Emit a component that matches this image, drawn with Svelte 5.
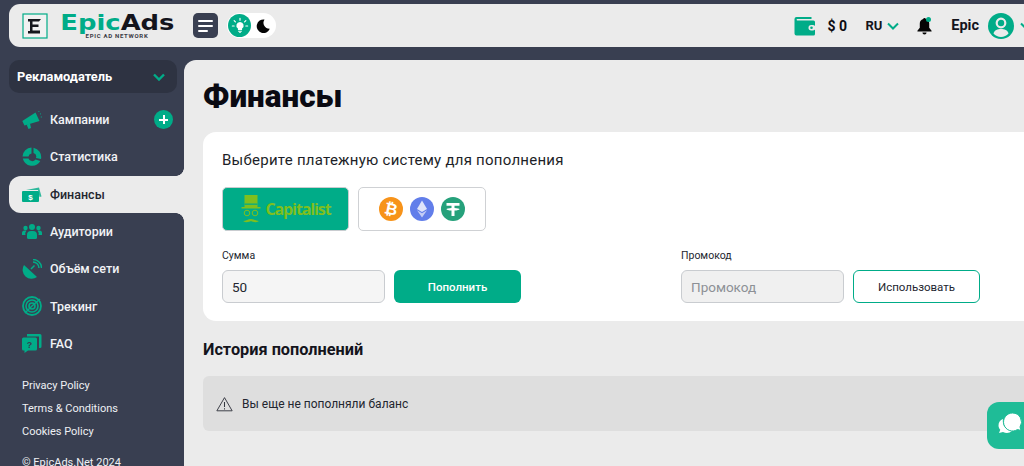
<script>
  const nav = [
    { id: 'camp', label: 'Кампании', plus: true },
    { id: 'stat', label: 'Статистика' },
    { id: 'fin', label: 'Финансы', active: true },
    { id: 'aud', label: 'Аудитории' },
    { id: 'net', label: 'Объём сети' },
    { id: 'track', label: 'Трекинг' },
    { id: 'faq', label: 'FAQ' }
  ];
  const links = ['Privacy Policy', 'Terms & Conditions', 'Cookies Policy'];
</script>

<div class="page">
  <header class="top">
    <svg class="logo" viewBox="0 0 26 26" width="26" height="26">
      <rect x="1" y="1" width="24" height="24" fill="#f1f1f1" stroke="#00ac88" stroke-width="1.200"/>
      <path d="M6 6h13l-2 2.500h-6.500v3h6v2.500h-6v3.500h7.500v3H6v-2.500h2V8.500H6z" fill="#15161c"/>
    </svg>
    <div class="brand">
      <div class="brandname"><span class="g">Epic</span><span class="k">Ads</span></div>
      <div class="tag">EPIC AD NETWORK</div>
    </div>
    <button class="burger" aria-label="menu">
      <span class="l1"></span><span class="l2"></span><span class="l3"></span>
    </button>
    <div class="theme">
      <span class="sun">
        <svg viewBox="0 0 20 20" width="18" height="18">
          <path d="M10 5.500a4 4 0 0 0-2.300 7.300v1.700h4.600v-1.700A4 4 0 0 0 10 5.500zM8 15.400h4v1.100H8zM9 17h2v.8H9z" fill="#fff"/>
          <path d="M10 1.500v2M3.500 4l1.400 1.400M16.500 4l-1.400 1.400M1.500 10h2M16.500 10h2" stroke="#fff" stroke-width="1.300" stroke-linecap="round"/>
        </svg>
      </span>
      <svg class="moon" viewBox="0 0 16 16" width="16" height="16">
        <path d="M9.500 1.500a6.800 6.800 0 1 0 5.300 9.300A6 6 0 0 1 9.500 1.500z" fill="#050505"/>
      </svg>
    </div>
    <div class="spacer"></div>
    <svg class="wallet" viewBox="0 0 22 20" width="23" height="20">
      <path d="M3 1h15v2H3.500a1 1 0 0 0 0 1.500H20a1.500 1.500 0 0 1 1.500 1.500v12A1.500 1.500 0 0 1 20 19.500H3A2 2 0 0 1 1 17.500V3a2 2 0 0 1 2-2z" fill="#00ac88"/>
      <rect x="15" y="9" width="7" height="5.500" rx="2.700" fill="#ebebeb"/>
      <circle cx="18" cy="11.700" r="1.300" fill="#00ac88"/>
    </svg>
    <span class="bal">$ 0</span>
    <span class="lang">RU</span>
    <svg class="chev" viewBox="0 0 12 8" width="12" height="8"><path d="M1 1.500l5 5 5-5" fill="none" stroke="#00ac88" stroke-width="2"/></svg>
    <span class="bell">
      <svg viewBox="0 0 18 20" width="17" height="19">
        <path d="M9 2a1.400 1.400 0 0 1 1.400 1.200A5 5 0 0 1 14 8v4.500l2.500 3v.8h-15v-.8l2.500-3V8a5 5 0 0 1 3.600-4.800A1.400 1.400 0 0 1 9 2zM6.800 17.300h4.400a2.200 2.200 0 0 1-4.400 0z" fill="#050505"/>
      </svg>
      <i></i>
    </span>
    <span class="user">Epic</span>
    <svg class="ava" viewBox="0 0 26 26" width="26" height="26">
      <circle cx="13" cy="13" r="13" fill="#00ac88"/>
      <circle cx="13" cy="10" r="4.300" fill="none" stroke="#ebebeb" stroke-width="2.200"/>
      <path d="M5.500 20.500c1-3.500 4-4.500 7.500-4.500s6.500 1 7.500 4.500a10 10 0 0 1-15 0z" fill="#ebebeb"/>
    </svg>
    <svg class="chev last" viewBox="0 0 12 8" width="12" height="8"><path d="M1 1.500l5 5 5-5" fill="none" stroke="#00ac88" stroke-width="2"/></svg>
  </header>

  <div class="layout">
    <aside class="side">
      <div class="role">
        <span>Рекламодатель</span>
        <svg viewBox="0 0 12 8" width="12" height="8"><path d="M1 1.500l5 5 5-5" fill="none" stroke="#00ac88" stroke-width="2.400"/></svg>
      </div>
      <nav class="nav">
        {#each nav as item}
          <div class="item" class:active={item.active}>
            <svg class="ico" viewBox="0 0 20 20" width="20" height="20">
              {#if item.id === 'camp'}
                <path d="M.3 11L13.500 2.500l4 8.500-15 4.500z" fill="#00ac88"/>
                <path d="M4.500 14.500l3.500-1 1 4.500-2.500 1z" fill="#00ac88"/>
                <path d="M16.500 2l.6-.8M18 4.200l.9-.5M18.800 7h1" stroke="#00ac88" stroke-width="1"/>
              {:else if item.id === 'stat'}
                <path d="M9.500.5A9.500 9.500 0 0 0 .5 9.500h6a3.500 3.500 0 0 1 3-3z" fill="#00ac88"/>
                <path d="M11.500.7A9.500 9.500 0 0 1 19 12l-5-1a4 4 0 0 0-2.500-5z" fill="#00ac88"/>
                <path d="M.8 11.500h5.700a4 4 0 0 0 7 1l4.800 1.500A9.500 9.500 0 0 1 .8 11.500z" fill="#00ac88"/>
              {:else if item.id === 'fin'}
                <path d="M4 6l13-2.500 2.500 9-2 .5-1.500-7z" fill="#00ac88" opacity=".8"/>
                <rect x="0" y="7" width="17" height="11" rx="1" fill="#00ac88"/>
                <text x="8.500" y="15.500" text-anchor="middle" font-size="8" font-weight="700" fill="#fff" font-family="Liberation Sans">$</text>
              {:else if item.id === 'aud'}
                <circle cx="10" cy="5" r="3" fill="#00ac88"/>
                <circle cx="3.500" cy="6" r="2.200" fill="#00ac88"/>
                <circle cx="16.500" cy="6" r="2.200" fill="#00ac88"/>
                <path d="M5 16v-3a4 4 0 0 1 4-4h2a4 4 0 0 1 4 4v3a1.500 1.500 0 0 1-1.500 1h-7A1.500 1.500 0 0 1 5 16z" fill="#00ac88"/>
                <path d="M0 13v-2a2.500 2.500 0 0 1 2.500-2.500h2A5 5 0 0 0 3.500 13zM20 13v-2a2.500 2.500 0 0 0-2.500-2.500h-2a5 5 0 0 1 1 4.500z" fill="#00ac88"/>
              {:else if item.id === 'net'}
                <path d="M2 6l13 12a9 9 0 0 1-13-12z" fill="#00ac88"/>
                <path d="M9 10l3.500-3.500M11 3a6 6 0 0 1 6 6M11 .5a8.500 8.500 0 0 1 8.500 8.500" fill="none" stroke="#00ac88" stroke-width="1.500"/>
              {:else if item.id === 'track'}
                <circle cx="10" cy="10" r="9" fill="none" stroke="#00ac88" stroke-width="1.800"/>
                <circle cx="10" cy="10" r="6" fill="none" stroke="#00ac88" stroke-width="1.600"/>
                <circle cx="10" cy="10" r="3" fill="none" stroke="#00ac88" stroke-width="1.600"/>
                <path d="M10 10L3 17M10 10L18 3" stroke="#00ac88" stroke-width="1.400"/>
              {:else}
                <path d="M5 1h13a1.500 1.500 0 0 1 1.500 1.500v11a1.500 1.500 0 0 1-1.500 1.500h-1V3.500H5z" fill="#00ac88"/>
                <path d="M1.500 4.500h12A1.500 1.500 0 0 1 15 6v10a1.500 1.500 0 0 1-1.500 1.500H6L2.500 20v-2.500h-1A1.500 1.500 0 0 1 0 16V6a1.500 1.500 0 0 1 1.500-1.500z" fill="#00ac88"/>
                <text x="7.500" y="15" text-anchor="middle" font-size="9" font-weight="700" fill="#393f51" font-family="Liberation Sans">?</text>
              {/if}
            </svg>
            <span class="lbl">{item.label}</span>
            {#if item.plus}<span class="plus"></span>{/if}
          </div>
        {/each}
      </nav>
      <div class="links">
        {#each links as l}<span>{l}</span>{/each}
      </div>
      <div class="copy">© EpicAds.Net 2024</div>
    </aside>

    <main class="main">
      <h1>Финансы</h1>
      <section class="card">
        <div class="ctitle">Выберите платежную систему для пополнения</div>
        <div class="systems">
          <div class="sys cap">
            <svg viewBox="0 0 22 30" width="22" height="30">
              <path d="M4.500 1h13v12h3v1.500H1.500V13h3z" fill="#7fbf1e"/>
              <path d="M4.500 9.500h13v1.300h-13z" fill="#00ac88"/>
              <circle cx="7" cy="19" r="2.800" fill="none" stroke="#7fbf1e" stroke-width="1"/>
              <circle cx="15" cy="19" r="2.800" fill="none" stroke="#7fbf1e" stroke-width="1"/>
              <path d="M3 27c3 0 5-2 8-2s5 2 8 2c-3 2-6 1-8 0-2 1-5 2-8 0z" fill="#7fbf1e"/>
            </svg>
            <span>Capitalist</span>
          </div>
          <div class="sys crypto">
            <span class="coin btc">
              <svg viewBox="0 0 24 24" width="24" height="24"><circle cx="12" cy="12" r="12" fill="#f7931a"/><text x="12" y="17.500" text-anchor="middle" font-size="16" font-weight="700" fill="#fff" font-family="Liberation Sans" transform="rotate(12 12 12)">₿</text></svg>
            </span>
            <span class="coin">
              <svg viewBox="0 0 24 24" width="24" height="24"><circle cx="12" cy="12" r="12" fill="#627eea"/><path d="M12 3.500l5 8.500-5 3-5-3z" fill="#dfe4fa"/><path d="M12 16.200l5-3-5 7.300-5-7.300z" fill="#c4cdf6"/></svg>
            </span>
            <span class="coin">
              <svg viewBox="0 0 24 24" width="24" height="24"><circle cx="12" cy="12" r="12" fill="#26a17b"/><path d="M5.500 6h13v2.800h-5v2.100c2.700.1 5 .6 5 1.300s-2.300 1.200-5 1.300V19h-3v-5.500c-2.700-.1-5-.6-5-1.300s2.300-1.200 5-1.300V8.800h-5z" fill="#fff"/></svg>
            </span>
          </div>
        </div>
        <div class="forms">
          <div class="fgroup">
            <div class="flabel">Сумма</div>
            <div class="frow">
              <div class="input val">50</div>
              <div class="btn solid">Пополнить</div>
            </div>
          </div>
          <div class="fgroup">
            <div class="flabel">Промокод</div>
            <div class="frow">
              <div class="input ph">Промокод</div>
              <div class="btn outline">Использовать</div>
            </div>
          </div>
        </div>
      </section>
      <h2>История пополнений</h2>
      <div class="alert">
        <svg viewBox="0 0 20 18" width="17" height="16">
          <path d="M10 1.500L19 17H1z" fill="none" stroke="#33363f" stroke-width="1.100" stroke-linejoin="round"/>
          <path d="M10 6.500v6M10 14v1.400" stroke="#33363f" stroke-width="1.200"/>
        </svg>
        <span>Вы еще не пополняли баланс</span>
      </div>
      <div class="chat">
        <svg viewBox="0 0 24 22" width="24" height="22">
          <path d="M5 6a7 7 0 0 0-4.500 6.500c0 1.700.7 3.200 1.800 4.300L1 20l4-1a8 8 0 0 0 9-1A10 10 0 0 1 5 6z" fill="#fff"/>
          <path d="M14.500 0a9 9 0 1 0 5 16.500l3.500 1-1-3.500A9 9 0 0 0 14.500 0z" fill="#fff" stroke="#1fbc97" stroke-width="1"/>
        </svg>
      </div>
    </main>
  </div>
</div>

<style>
  :global(body) { margin: 0; background: #393f51; overflow: hidden; }
  .page {
    width: 1024px; height: 466px; overflow: hidden; background: #393f51;
    font-family: "Roboto", "Noto Sans", sans-serif; color: #0b0b12;
    display: flex; flex-direction: column; position: relative;
  }
  .top {
    margin: 4px 0 0 9px; height: 43px; flex: none; background: #ebebeb;
    border-radius: 11px 0 0 11px; display: flex; align-items: center; padding-left: 13px;
    box-sizing: border-box;
  }
  .logo { flex: none; }
  .brand { margin-left: 13px; width: 112px; display: flex; flex-direction: column; align-items: center; }
  .brandname { font-family: "DejaVu Sans", sans-serif; font-size: 21px; font-weight: 700; line-height: 20px; transform: scaleX(1.23); white-space: nowrap; }
  .g { color: #00ac88; }
  .k { color: #14141c; }
  .tag { font-size: 6px; line-height: 6px; letter-spacing: 0.7px; color: #3a3a44; font-weight: 700; margin-top: 0; }
  .burger { margin-left: 20px; width: 25px; height: 25px; border: 0; padding: 0 5px; background: #393f51; border-radius: 5px; display: flex; flex-direction: column; justify-content: center; gap: 3px; align-items: flex-start; box-sizing: border-box; }
  .burger span { display: block; height: 2px; background: #fff; border-radius: 1px; }
  .l1 { width: 15px; } .l2 { width: 15px; } .l3 { width: 10px; }
  .theme { margin-left: 9px; width: 49px; height: 25px; background: #fff; border-radius: 13px; display: flex; align-items: center; padding: 0 1px; box-sizing: border-box; }
  .sun { width: 23px; height: 23px; background: #00ac88; border-radius: 50%; display: flex; align-items: center; justify-content: center; }
  .moon { margin-left: 4px; }
  .spacer { flex: 1; }
  .wallet { flex: none; }
  .bal { margin-left: 11px; font-size: 14px; font-weight: 700; width: 20px; white-space: nowrap; }
  .lang { margin-left: 18px; font-size: 13px; font-weight: 700; color: #14141c; }
  .chev { margin-left: 5px; flex: none; }
  .bell { margin-left: 17px; position: relative; display: flex; }
  .bell i { position: absolute; right: 2px; top: 1px; width: 5px; height: 5px; border-radius: 50%; background: #00ac88; }
  .user { margin-left: 18px; font-size: 14.500px; font-weight: 700; color: #14141c; }
  .ava { margin-left: 9px; flex: none; }
  .last { margin-left: 6px; margin-right: -8px; }

  .layout { flex: 1; display: flex; min-height: 0; margin-top: 13px; }
  .side { width: 184px; flex: none; color: #fff; display: flex; flex-direction: column; min-height: 0; }
  .side > * { flex: none; }
  .role { margin-left: 9px; width: 168px; height: 33px; background: #2e3342; border-radius: 10px; display: flex; align-items: center; justify-content: space-between; padding: 0 12px 0 8px; box-sizing: border-box; font-size: 12.800px; font-weight: 700; }
  .nav { margin: 8px 0 0 9px; display: flex; flex-direction: column; }
  .item { height: 37.300px; display: flex; align-items: center; padding-left: 13px; box-sizing: border-box; font-size: 12.500px; color: #f2f3f6; font-weight: 500; position: relative; }
  .item.active { background: #ebebeb; color: #23262f; border-radius: 12px 0 0 12px; }
  .item.active::before, .item.active::after { content: ""; position: absolute; right: 0; width: 8px; height: 8px; background: radial-gradient(circle at 0 0, #393f51 7.500px, #ebebeb 8px); }
  .item.active::before { top: -8px; }
  .item.active::after { bottom: -8px; background: radial-gradient(circle at 0 100%, #393f51 7.500px, #ebebeb 8px); }
  .ico { flex: none; }
  .lbl { margin-left: 8px; }
  .plus { position: absolute; left: 145px; top: 9px; width: 19px; height: 19px; border-radius: 50%; background: #00ac88; }
  .plus::before { content: ""; position: absolute; left: 5px; top: 8.500px; width: 9px; height: 2px; background: #fff; }
  .plus::after { content: ""; position: absolute; left: 8.500px; top: 5px; width: 2px; height: 9px; background: #fff; }
  .links { margin: 16.700px 0 0 22px; display: flex; flex-direction: column; gap: 8.500px; font-size: 11px; line-height: 14.500px; color: #eef0f4; }
  .copy { margin: 17px 0 0 22px; font-size: 11px; line-height: 14px; color: #eef0f4; white-space: nowrap; }

  .main { flex: 1; min-width: 0; background: #ebebeb; border-top-left-radius: 12px; padding: 0 0 0 19px; box-sizing: border-box; position: relative; }
  h1 { margin: 17px 0 0; font-size: 31.500px; line-height: 40px; font-weight: 900; color: #0a0a12; }
  .card { margin-top: 15px; width: 840px; height: 189px; background: #fff; border-radius: 13px; padding: 19px; box-sizing: border-box; }
  .ctitle { font-size: 15px; line-height: 18px; color: #1d1f28; letter-spacing: 0.25px; }
  .systems { display: flex; gap: 9px; margin-top: 18px; }
  .sys { width: 128px; height: 44px; box-sizing: border-box; border-radius: 5px; display: flex; align-items: center; justify-content: center; }
  .cap { background: #00ac88; border: 1px solid #c9ccd0; gap: 3px; width: 127px; }
  .cap span { font-size: 16px; font-family: "Open Sans", sans-serif; font-weight: 700; color: #7fbf1e; letter-spacing: -1.100px; }
  .crypto { border: 1px solid #cfd1d4; gap: 7px; background: #fff; }
  .coin { display: flex; }
  .forms { display: flex; margin-top: 17px; }
  .fgroup { width: 459px; flex: none; }
  .flabel { font-size: 10.500px; line-height: 14px; color: #23262f; padding-top: 1px; }
  .frow { display: flex; gap: 9px; margin-top: 7px; }
  .input { width: 163px; height: 33px; box-sizing: border-box; border: 1px solid #c9ccd0; border-radius: 6px; background: #f5f5f5; display: flex; align-items: center; padding-left: 9px; font-size: 13.500px; color: #23262f; }
  .ph { color: #8d9096; background: #f0f0f0; font-size: 13.500px; }
  .btn { width: 127px; height: 33px; box-sizing: border-box; border-radius: 6px; display: flex; align-items: center; justify-content: center; font-size: 11.500px; font-weight: 500; }
  .solid { background: #00ac88; color: #fff; }
  .outline { border: 1px solid #00ac88; background: #fff; color: #23262f; font-weight: 400; }
  h2 { margin: 19px 0 0; font-size: 16.300px; line-height: 20px; font-weight: 700; color: #14141c; }
  .alert { margin-top: 16px; width: 840px; height: 55px; background: #dedede; border-radius: 6px; display: flex; align-items: center; padding-left: 13px; box-sizing: border-box; gap: 9px; font-size: 12px; color: #23262f; }
  .chat { position: absolute; left: 803px; top: 342px; width: 60px; height: 47px; background: #1fbc97; border-radius: 12px 0 0 12px; display: flex; padding: 11px 0 0 11px; box-sizing: border-box; }
</style>
